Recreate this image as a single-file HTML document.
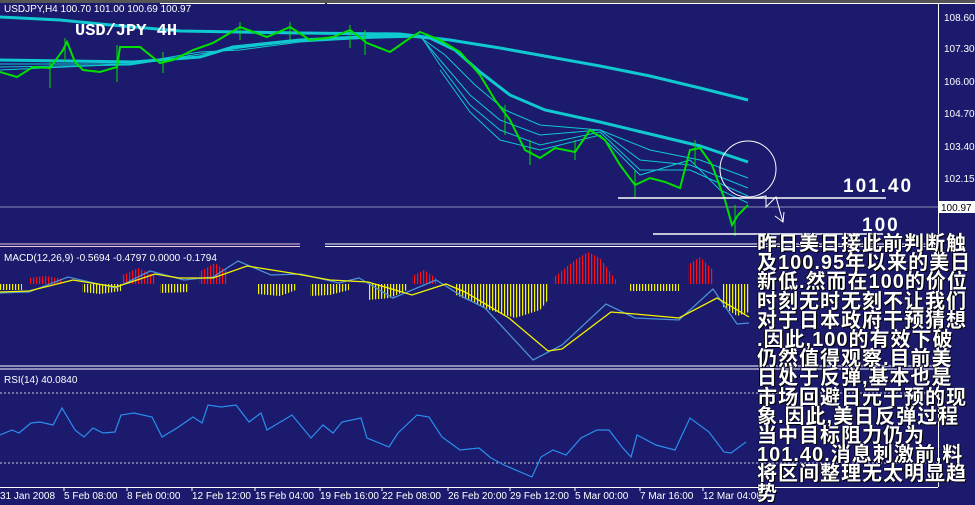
<!DOCTYPE html>
<html><head><meta charset="utf-8"><style>
html,body{margin:0;padding:0;width:975px;height:505px;overflow:hidden;background:#1b1a6c;}
svg{position:absolute;left:0;top:0}
.t{font-family:"Liberation Sans",sans-serif;font-size:10px;fill:#fff}
#txt{position:absolute;left:757px;top:235px;width:218px;color:#fff;font-family:"Liberation Sans","Noto Sans CJK SC",sans-serif;font-weight:bold;font-size:20px;line-height:19.2px;letter-spacing:1px;white-space:nowrap;text-shadow:1px 1px 0 #000,-1px 0 0 #000}
</style></head><body>
<svg width="975" height="505" viewBox="0 0 975 505">
<defs>
<pattern id="pr" width="3" height="10" patternUnits="userSpaceOnUse"><rect x="0" y="0" width="1.2" height="10" fill="#ff1010"/></pattern>
<pattern id="py" width="3" height="10" patternUnits="userSpaceOnUse"><rect x="0" y="0" width="1.2" height="10" fill="#f5f500"/></pattern>
</defs>
<rect x="0" y="0" width="975" height="3" fill="#555"/>
<line x1="160" y1="3.5" x2="325" y2="3.5" stroke="#fff"/>
<line x1="327" y1="3.5" x2="975" y2="3.5" stroke="#fff"/>
<line x1="938.5" y1="4" x2="938.5" y2="487" stroke="#fff"/>
<!-- main chart -->
<line x1="0" y1="207" x2="938" y2="207" stroke="#8a8ab0"/>
<polyline fill="none" stroke="#10c8d0" stroke-width="3" points="0,17 60,20 100,24 180,31 300,33 400,34 450,40 500,48 550,57 600,66 650,76 700,88 748,100"/>
<polyline fill="none" stroke="#10c8d0" stroke-width="3" points="0,60 133,62 200,57 233,47 300,40 400,35 430,38 455,50 480,72 510,95 545,110 600,122 650,134 700,146 748,162"/>
<polyline fill="none" stroke="#10c8d0" stroke-width="1" points="0,64 130,64 200,56 240,46 300,40 420,37 445,55 475,85 505,110 540,125 600,130 650,150 700,160 748,178"/>
<polyline fill="none" stroke="#10c8d0" stroke-width="1" points="0,67 130,65 200,54 240,48 300,41 420,36 440,60 470,95 500,120 540,135 600,130 640,160 690,165 748,188"/>
<polyline fill="none" stroke="#10c8d0" stroke-width="1" points="0,70 130,64 200,52 240,50 300,42 420,35 440,65 470,105 500,130 540,145 600,132 640,170 690,170 748,196"/>
<polyline fill="none" stroke="#10c8d0" stroke-width="1" points="440,70 470,112 500,140 540,150 600,135 640,175 690,160 720,190 748,203"/>
<polyline fill="none" stroke="#00e000" stroke-width="2" points="0,72 17,77 33,67 50,68 63,50 67,42 75,62 83,70 100,72 117,67 120,47 140,47 160,63 173,60 193,50 213,43 240,27 267,37 290,27 310,40 333,37 350,30 367,43 390,52 410,38 420,32 440,40 460,52 480,75 495,100 510,120 525,150 540,158 555,148 575,152 590,130 605,140 620,165 635,185 650,178 665,182 680,188 690,150 700,148 712,165 725,200 732,225 738,215 748,205"/>
<g stroke="#00e000" stroke-width="1">
<line x1="50" y1="60" x2="50" y2="88"/><line x1="65" y1="38" x2="65" y2="62"/><line x1="117" y1="45" x2="117" y2="82"/><line x1="163" y1="52" x2="163" y2="73"/><line x1="240" y1="22" x2="240" y2="40"/><line x1="290" y1="22" x2="290" y2="40"/><line x1="350" y1="25" x2="350" y2="48"/><line x1="365" y1="30" x2="365" y2="55"/><line x1="505" y1="105" x2="505" y2="135"/><line x1="530" y1="140" x2="530" y2="165"/><line x1="575" y1="140" x2="575" y2="160"/><line x1="635" y1="170" x2="635" y2="198"/><line x1="695" y1="140" x2="695" y2="165"/><line x1="735" y1="205" x2="735" y2="236"/></g>
<line x1="618" y1="198" x2="886" y2="198" stroke="#fff" stroke-width="1.5"/>
<line x1="653" y1="234" x2="883" y2="234" stroke="#fff" stroke-width="1.5"/>
<circle cx="748" cy="169" r="28" fill="none" stroke="#fff"/>
<polyline fill="none" stroke="#fff" points="754,198 766,196 766,207 776,197 783,222"/>
<polyline fill="none" stroke="#fff" points="775,216 783,222 784,212"/>
<text x="843" y="192" fill="#fff" font-family="Liberation Sans,sans-serif" font-weight="bold" font-size="19" letter-spacing="2">101.40</text>
<text x="862" y="231" fill="#fff" font-family="Liberation Sans,sans-serif" font-weight="bold" font-size="19" letter-spacing="2">100</text>
<text class="t" x="4" y="12">USDJPY,H4  100.70 101.00 100.69 100.97</text>
<text x="75" y="35" fill="#fff" font-family="Liberation Mono,monospace" font-weight="bold" font-size="17">USD/JPY 4H</text>
<g class="t">
<text x="944" y="21">108.60</text><text x="944" y="52">107.30</text><text x="944" y="85">106.00</text>
<text x="944" y="117">104.70</text><text x="944" y="150">103.40</text><text x="944" y="182">102.15</text>
</g>
<rect x="939" y="201" width="36" height="12" fill="#fff"/>
<text x="941" y="211" font-family="Liberation Sans,sans-serif" font-size="10" fill="#000">100.97</text>
<!-- separators -->
<line x1="0" y1="244" x2="300" y2="244" stroke="#e8c8d8"/><line x1="0" y1="246.5" x2="300" y2="246.5" stroke="#e8c8d8"/>
<line x1="325" y1="244" x2="938" y2="244" stroke="#fff"/><line x1="325" y1="246.5" x2="938" y2="246.5" stroke="#fff"/>
<line x1="0" y1="366" x2="938" y2="366" stroke="#fff"/><line x1="0" y1="369" x2="938" y2="369" stroke="#fff"/>
<!-- MACD -->
<text class="t" x="4" y="261">MACD(12,26,9) -0.5694 -0.4797 0.0000 -0.1794</text>
<g fill="url(#pr)">
<polygon points="29,284 29,278 46,276 63,279 63,284"/>
<polygon points="121,284 121,276 138,268 155,276 155,284"/>
<polygon points="199,284 199,272 215,263 228,272 228,284"/>
<polygon points="412,284 412,276 424,270 436,278 436,284"/>
<polygon points="553,284 553,278 575,260 588,252 600,258 616,280 616,284"/>
<polygon points="688,284 688,265 700,257 713,270 713,284"/>
</g>
<g fill="url(#py)">
<polygon points="0,284 0,290 22,290 22,284"/>
<polygon points="82,284 82,292 100,294 121,291 121,284"/>
<polygon points="160,284 160,293 189,292 189,284"/>
<polygon points="257,284 257,294 280,296 296,290 296,284"/>
<polygon points="310,284 310,296 330,295 349,290 349,284"/>
<polygon points="368,284 368,300 390,298 407,290 407,284"/>
<polygon points="456,284 456,295 490,310 515,318 540,310 548,300 548,284"/>
<polygon points="630,284 630,291 679,291 679,284"/>
<polygon points="722,284 722,306 737,316 749,312 749,284"/>
</g>
<polyline fill="none" stroke="#4a90d8" stroke-width="1.3" points="0,293 29,292 68,277 116,288 150,271 184,280 213,277 238,261 271,275 301,274 339,283 359,278 393,298 436,280 465,298 485,308 533,360 562,345 606,304 635,318 679,320 713,289 737,324 749,323"/>
<polyline fill="none" stroke="#f5f500" stroke-width="1.3" points="0,292 29,291 73,280 116,287 155,274 179,278 213,278 247,266 291,273 330,280 368,282 412,295 446,284 465,292 509,318 548,351 562,349 611,312 635,314 679,318 717,298 749,317"/>
<!-- RSI -->
<text class="t" x="4" y="383">RSI(14) 40.0840</text>
<line x1="0" y1="393" x2="938" y2="393" stroke="#ccc" stroke-dasharray="2,2"/>
<line x1="0" y1="463" x2="938" y2="463" stroke="#ccc" stroke-dasharray="2,2"/>
<polyline fill="none" stroke="#2a8ef0" stroke-width="1.2" points="0,435 12,430 19,433 31,423 40,422 53,425 62,408 75,430 84,437 93,428 103,433 115,432 121,415 134,413 152,417 162,437 177,428 193,417 202,423 208,405 221,407 236,405 249,422 261,413 267,430 292,415 311,438 323,425 333,433 342,422 361,418 367,438 389,447 398,433 417,415 429,417 442,437 460,450 479,448 491,458 504,465 532,477 541,457 553,450 566,455 581,438 597,430 609,430 622,447 631,457 637,435 656,445 675,450 690,418 709,432 724,452 731,453 746,442"/>
<line x1="0" y1="487.5" x2="938" y2="487.5" stroke="#fff"/>
<g class="t">
<text x="0" y="499">31 Jan 2008</text><text x="64" y="499">5 Feb 08:00</text><text x="127" y="499">8 Feb 00:00</text>
<text x="192" y="499">12 Feb 12:00</text><text x="255" y="499">15 Feb 04:00</text><text x="320" y="499">19 Feb 16:00</text>
<text x="382" y="499">22 Feb 08:00</text><text x="448" y="499">26 Feb 20:00</text><text x="510" y="499">29 Feb 12:00</text>
<text x="575" y="499">5 Mar 00:00</text><text x="640" y="499">7 Mar 16:00</text><text x="703" y="499">12 Mar 04:00</text>
</g>
<g stroke="#fff"><line x1="64" y1="487" x2="64" y2="491"/><line x1="127" y1="487" x2="127" y2="491"/><line x1="192" y1="487" x2="192" y2="491"/><line x1="255" y1="487" x2="255" y2="491"/><line x1="320" y1="487" x2="320" y2="491"/><line x1="382" y1="487" x2="382" y2="491"/><line x1="448" y1="487" x2="448" y2="491"/><line x1="510" y1="487" x2="510" y2="491"/><line x1="575" y1="487" x2="575" y2="491"/><line x1="640" y1="487" x2="640" y2="491"/><line x1="703" y1="487" x2="703" y2="491"/></g>
</svg>
<div id="txt">昨日美日接此前判断触<br>及100.95年以来的美日<br>新低.然而在100的价位<br>时刻无时无刻不让我们<br>对于日本政府干预猜想<br>.因此,100的有效下破<br>仍然值得观察.目前美<br>日处于反弹,基本也是<br>市场回避日元干预的现<br>象.因此,美日反弹过程<br>当中目标阻力仍为<br>101.40.消息刺激前,料<br>将区间整理无太明显趋<br>势</div>
</body></html>
